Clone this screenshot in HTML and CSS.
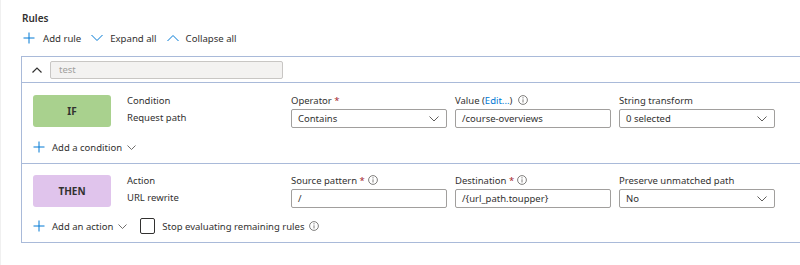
FILE: index.html
```html
<!DOCTYPE html>
<html lang="en">
<head>
  <meta charset="UTF-8">
  <meta name="viewport" content="width=800, initial-scale=1.0">
  <title>Rules</title>
  <link rel="stylesheet" href="styles.css">
</head>
<body>
  <div class="page">
    <h3 class="title">Rules</h3>
    <div class="toolbar">
      <span class="tool">
        <svg class="ico-plus" viewBox="0 0 12 12"><path d="M6 0.5v11M0.5 6h11"/></svg>Add rule
      </span>
      <span class="tool">
        <svg class="ico-chev" viewBox="0 0 12 8"><path d="M0.5 1l5.5 5.5 5.5-5.5"/></svg>Expand all
      </span>
      <span class="tool">
        <svg class="ico-chev" viewBox="0 0 12 8"><path d="M0.5 7l5.5-5.5 5.5 5.5"/></svg>Collapse all
      </span>
    </div>

    <div class="rule">
      <div class="rule-head">
        <svg class="ico-head" viewBox="0 0 10 6"><path d="M0.5 5.5l4.5-4.5 4.5 4.5"/></svg>
        <div class="rule-name">test</div>
      </div>

      <div class="section">
        <div class="row">
          <div class="tag tag-if">IF</div>
          <div class="desc">
            <div>Condition</div>
            <div>Request path</div>
          </div>
          <div class="field">
            <div class="label">Operator <span class="req">*</span></div>
            <div class="box">Contains<svg class="ico-sel" viewBox="0 0 10 6"><path d="M0.5 0.5l4.5 4.5 4.5-4.5"/></svg></div>
          </div>
          <div class="field">
            <div class="label">Value (<span class="link">Edit...</span>) <svg class="ico-info" viewBox="0 0 10 10"><circle cx="5" cy="5" r="4.4"/><path d="M5 4.3v3.2"/><circle class="dot" cx="5" cy="2.8" r="0.6"/></svg></div>
            <div class="box">/course-overviews</div>
          </div>
          <div class="field">
            <div class="label">String transform</div>
            <div class="box">0 selected<svg class="ico-sel" viewBox="0 0 10 6"><path d="M0.5 0.5l4.5 4.5 4.5-4.5"/></svg></div>
          </div>
        </div>
        <div class="add-row">
          <span class="add">
            <svg class="ico-plus" viewBox="0 0 12 12"><path d="M6 0.5v11M0.5 6h11"/></svg>Add a condition
            <svg class="ico-small" viewBox="0 0 9 5"><path d="M0.5 0.5l4 4 4-4"/></svg>
          </span>
        </div>
      </div>

      <div class="section last">
        <div class="row">
          <div class="tag tag-then">THEN</div>
          <div class="desc">
            <div>Action</div>
            <div>URL rewrite</div>
          </div>
          <div class="field">
            <div class="label">Source pattern <span class="req">*</span> <svg class="ico-info" viewBox="0 0 10 10"><circle cx="5" cy="5" r="4.4"/><path d="M5 4.3v3.2"/><circle class="dot" cx="5" cy="2.8" r="0.6"/></svg></div>
            <div class="box">/</div>
          </div>
          <div class="field">
            <div class="label">Destination <span class="req">*</span> <svg class="ico-info" viewBox="0 0 10 10"><circle cx="5" cy="5" r="4.4"/><path d="M5 4.3v3.2"/><circle class="dot" cx="5" cy="2.8" r="0.6"/></svg></div>
            <div class="box">/{url_path.toupper}</div>
          </div>
          <div class="field">
            <div class="label">Preserve unmatched path</div>
            <div class="box">No<svg class="ico-sel" viewBox="0 0 10 6"><path d="M0.5 0.5l4.5 4.5 4.5-4.5"/></svg></div>
          </div>
        </div>
        <div class="add-row">
          <span class="add">
            <svg class="ico-plus" viewBox="0 0 12 12"><path d="M6 0.5v11M0.5 6h11"/></svg>Add an action
            <svg class="ico-small" viewBox="0 0 9 5"><path d="M0.5 0.5l4 4 4-4"/></svg>
          </span>
          <span class="check"><span class="checkbox"></span>Stop evaluating remaining rules <svg class="ico-info" viewBox="0 0 10 10"><circle cx="5" cy="5" r="4.4"/><path d="M5 4.3v3.2"/><circle class="dot" cx="5" cy="2.8" r="0.6"/></svg></span>
        </div>
      </div>
    </div>
  </div>
</body>
</html>
```

FILE: styles.css
```css
body {
  margin: 0;
  background: #fff;
  font-family: 'Noto Sans', Arial, sans-serif;
  font-size: 9.5px;
  color: #323130;
  overflow: hidden;
}
.page {
  padding: 11px 0 0 20px;
  border-left: 1px solid #f0f0f0;
  height: 265px;
  box-sizing: border-box;
}
.title {
  margin: 0 0 0 1px;
  font-size: 10px;
  font-weight: 600;
  line-height: 14px;
}
.toolbar {
  display: flex;
  margin-top: 5px;
  height: 16px;
  align-items: center;
}
.tool {
  display: flex;
  align-items: center;
  margin-right: 10px;
  font-size: 9.6px;
}
.ico-plus {
  width: 12px;
  height: 12px;
  margin: 0 8px 0 2px;
  fill: none;
  stroke: #0078d4;
  stroke-width: 1;
}
.ico-chev {
  width: 12px;
  height: 8px;
  margin-right: 7px;
  fill: none;
  stroke: #0078d4;
  stroke-width: 1;
}
.rule {
  margin-top: 10px;
  border: 1px solid #a9bad9;
  border-right: none;
}
.rule-head {
  display: flex;
  align-items: center;
  padding: 4px 0 3px 10px;
}
.ico-head {
  width: 10px;
  height: 6px;
  fill: none;
  stroke: #323130;
  stroke-width: 1.2;
  margin-right: 8px;
}
.rule-name {
  width: 233px;
  height: 18px;
  box-sizing: border-box;
  border: 1px solid #c8c6c4;
  border-radius: 2px;
  background: #f3f2f1;
  color: #a19f9d;
  padding-left: 8px;
  line-height: 16px;
}
.section {
  border-top: 1px solid #a9bad9;
  padding: 9px 0 8px 11px;
}
.section.last {
  padding-top: 8px;
  padding-bottom: 8px;
}
.row {
  display: flex;
  gap: 8px;
}
.tag {
  width: 78px;
  height: 32px;
  margin-top: 3px;
  margin-right: 8px;
  border-radius: 3px;
  display: flex;
  align-items: center;
  justify-content: center;
  font-weight: 700;
  font-size: 10px;
}
.tag-if {
  background: #a9d18e;
}
.tag-then {
  background: #e0c4ec;
}
.desc {
  width: 156px;
  line-height: 17px;
}
.field {
  width: 156px;
}
.label {
  display: flex;
  align-items: center;
  height: 16px;
  margin-bottom: 1px;
  white-space: pre;
}
.req {
  color: #a4262c;
}
.link {
  color: #0078d4;
}
.ico-info {
  width: 10px;
  height: 10px;
  margin-left: 3px;
  fill: none;
  stroke: #605e5c;
  stroke-width: 0.8;
}
.ico-info .dot {
  fill: #605e5c;
  stroke: none;
}
.box {
  height: 19px;
  box-sizing: border-box;
  border: 1px solid #a19f9d;
  border-radius: 2px;
  padding: 0 7px 0 6px;
  display: flex;
  align-items: center;
  justify-content: space-between;
}
.ico-sel {
  width: 10px;
  height: 6px;
  fill: none;
  stroke: #605e5c;
  stroke-width: 1;
}
.add-row {
  display: flex;
  align-items: center;
  height: 16px;
  margin-top: 11px;
}
.section.last .add-row {
  margin-top: 10px;
}
.add {
  display: flex;
  align-items: center;
}
.add .ico-plus {
  margin: 0 7px 0 0;
}
.ico-small {
  width: 9px;
  height: 5px;
  margin-left: 5px;
  fill: none;
  stroke: #605e5c;
  stroke-width: 0.9;
}
.check {
  display: flex;
  align-items: center;
  margin-left: 13px;
}
.checkbox {
  width: 15px;
  height: 16px;
  box-sizing: border-box;
  border: 1px solid #323130;
  border-radius: 2px;
  margin-right: 7px;
}
.check .ico-info {
  margin-left: 5px;
}
```
